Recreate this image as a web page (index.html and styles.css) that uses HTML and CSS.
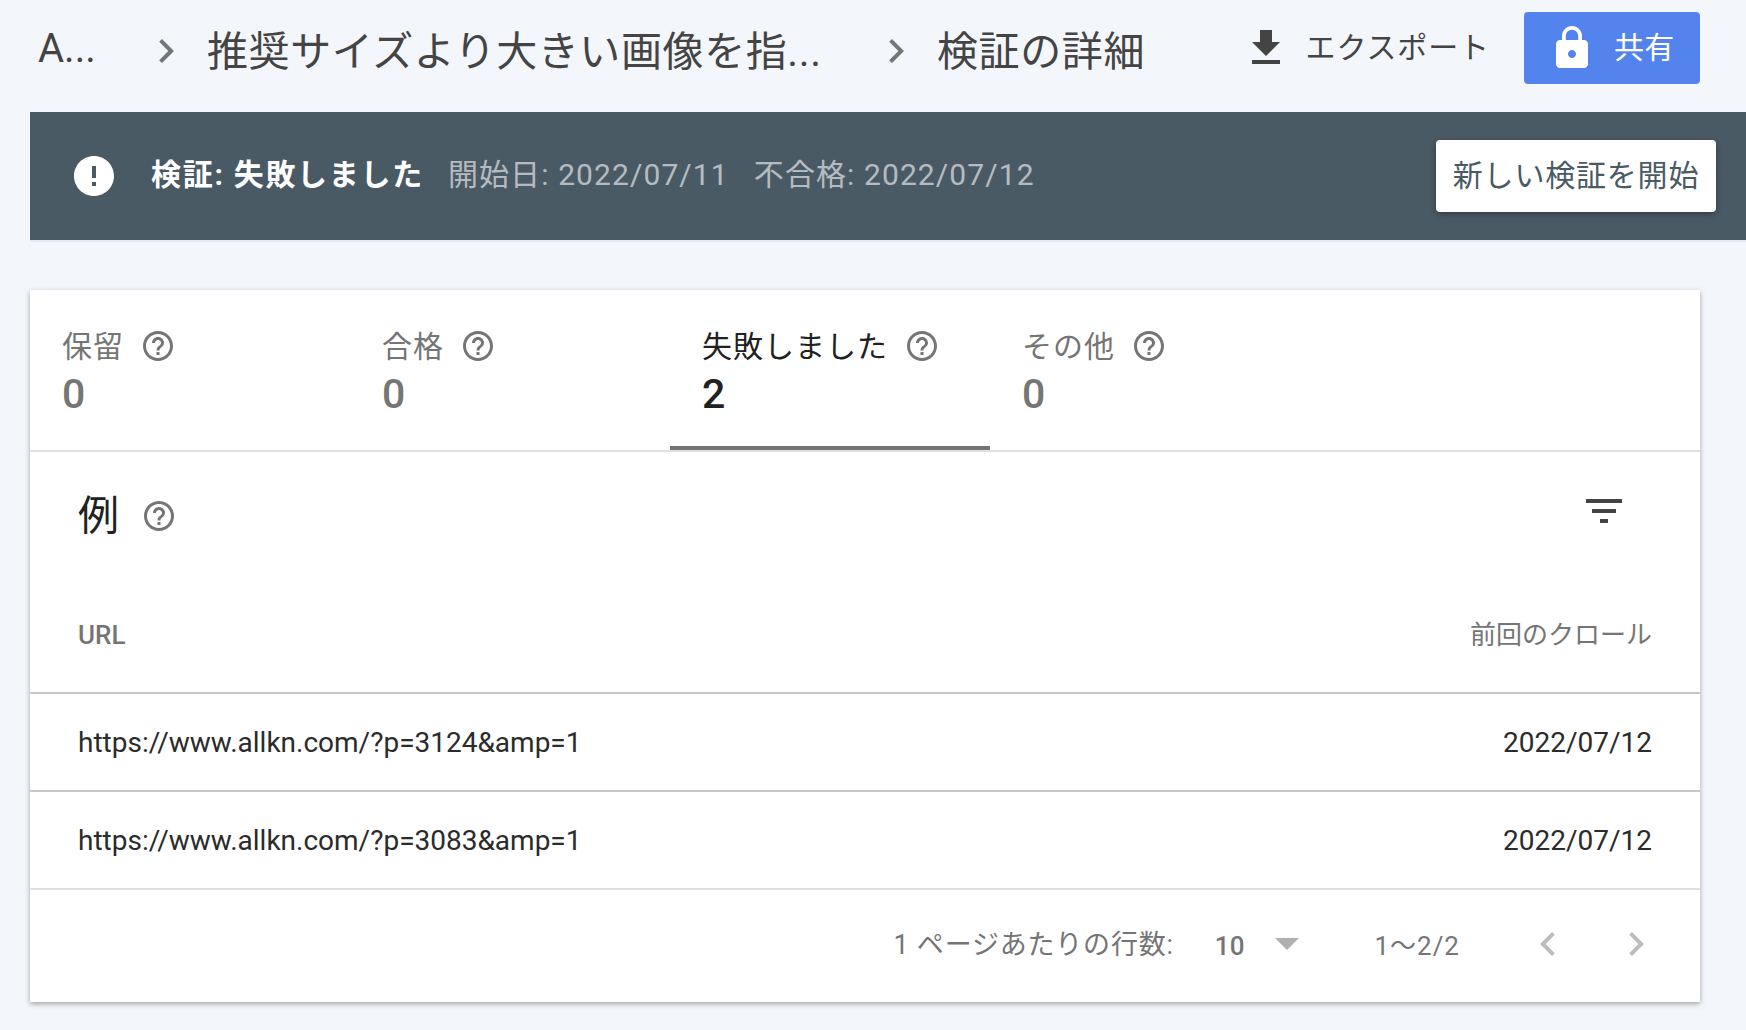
FILE: index.html
```html
<!DOCTYPE html>
<html lang="ja">

<head>
    <meta charset="UTF-8">
    <title>検証の詳細</title>
    <link rel="stylesheet" href="styles.css">
</head>

<body>
    <header class="top">
        <nav class="crumbs">
            <span class="crumb crumb-first">A...</span>
            <svg class="icon crumb-arrow" viewBox="0 0 24 24"><path d="M10 6L8.59 7.41 13.17 12l-4.58 4.59L10 18l6-6z"/></svg>
            <span class="crumb crumb-mid">推奨サイズより大きい画像を指...</span>
            <svg class="icon crumb-arrow" viewBox="0 0 24 24"><path d="M10 6L8.59 7.41 13.17 12l-4.58 4.59L10 18l6-6z"/></svg>
            <span class="crumb crumb-last">検証の詳細</span>
        </nav>
        <div class="actions">
            <div class="export">
                <svg class="icon" viewBox="0 0 24 24"><path d="M19 9h-4V3H9v6H5l7 7 7-7zM5 18v2h14v-2H5z"/></svg>
                <span class="action-text">エクスポート</span>
            </div>
            <div class="share">
                <svg class="icon" viewBox="0 0 24 24"><path d="M18 8h-1V6c0-2.76-2.24-5-5-5S7 3.24 7 6v2H6c-1.1 0-2 .9-2 2v10c0 1.1.9 2 2 2h12c1.1 0 2-.9 2-2V10c0-1.1-.9-2-2-2zm-6 9c-1.1 0-2-.9-2-2s.9-2 2-2 2 .9 2 2-.9 2-2 2zm3.1-9H8.9V6c0-1.71 1.39-3.1 3.1-3.1 1.71 0 3.1 1.39 3.1 3.1v2z"/></svg>
                <span class="action-text">共有</span>
            </div>
        </div>
    </header>

    <section class="banner">
        <svg class="icon banner-icon" viewBox="0 0 24 24"><path d="M12 2C6.48 2 2 6.48 2 12s4.48 10 10 10 10-4.48 10-10S17.52 2 12 2zm1 15h-2v-2h2v2zm0-4h-2V7h2v6z"/></svg>
        <strong class="banner-title">検証: 失敗しました</strong>
        <span class="banner-date">開始日: 2022/07/11</span>
        <span class="banner-date">不合格: 2022/07/12</span>
        <button class="banner-btn">新しい検証を開始</button>
    </section>

    <main class="card">
        <div class="tabs">
            <div class="tab">
                <div class="tab-label">保留
                    <svg class="icon help" viewBox="0 0 24 24"><path d="M11 18h2v-2h-2v2zm1-16C6.48 2 2 6.48 2 12s4.48 10 10 10 10-4.48 10-10S17.52 2 12 2zm0 18c-4.41 0-8-3.59-8-8s3.59-8 8-8 8 3.59 8 8-3.59 8-8 8zm0-14c-2.21 0-4 1.79-4 4h2c0-1.1.9-2 2-2s2 .9 2 2c0 2-3 1.75-3 5h2c0-2.25 3-2.5 3-5 0-2.21-1.79-4-4-4z"/></svg>
                </div>
                <div class="tab-num">0</div>
            </div>
            <div class="tab">
                <div class="tab-label">合格
                    <svg class="icon help" viewBox="0 0 24 24"><path d="M11 18h2v-2h-2v2zm1-16C6.48 2 2 6.48 2 12s4.48 10 10 10 10-4.48 10-10S17.52 2 12 2zm0 18c-4.41 0-8-3.59-8-8s3.59-8 8-8 8 3.59 8 8-3.59 8-8 8zm0-14c-2.21 0-4 1.79-4 4h2c0-1.1.9-2 2-2s2 .9 2 2c0 2-3 1.75-3 5h2c0-2.25 3-2.5 3-5 0-2.21-1.79-4-4-4z"/></svg>
                </div>
                <div class="tab-num">0</div>
            </div>
            <div class="tab tab-active">
                <div class="tab-label">失敗しました
                    <svg class="icon help" viewBox="0 0 24 24"><path d="M11 18h2v-2h-2v2zm1-16C6.48 2 2 6.48 2 12s4.48 10 10 10 10-4.48 10-10S17.52 2 12 2zm0 18c-4.41 0-8-3.59-8-8s3.59-8 8-8 8 3.59 8 8-3.59 8-8 8zm0-14c-2.21 0-4 1.79-4 4h2c0-1.1.9-2 2-2s2 .9 2 2c0 2-3 1.75-3 5h2c0-2.25 3-2.5 3-5 0-2.21-1.79-4-4-4z"/></svg>
                </div>
                <div class="tab-num">2</div>
            </div>
            <div class="tab">
                <div class="tab-label">その他
                    <svg class="icon help" viewBox="0 0 24 24"><path d="M11 18h2v-2h-2v2zm1-16C6.48 2 2 6.48 2 12s4.48 10 10 10 10-4.48 10-10S17.52 2 12 2zm0 18c-4.41 0-8-3.59-8-8s3.59-8 8-8 8 3.59 8 8-3.59 8-8 8zm0-14c-2.21 0-4 1.79-4 4h2c0-1.1.9-2 2-2s2 .9 2 2c0 2-3 1.75-3 5h2c0-2.25 3-2.5 3-5 0-2.21-1.79-4-4-4z"/></svg>
                </div>
                <div class="tab-num">0</div>
            </div>
        </div>

        <div class="section-head">
            <h2 class="section-title">例</h2>
            <svg class="icon help" viewBox="0 0 24 24"><path d="M11 18h2v-2h-2v2zm1-16C6.48 2 2 6.48 2 12s4.48 10 10 10 10-4.48 10-10S17.52 2 12 2zm0 18c-4.41 0-8-3.59-8-8s3.59-8 8-8 8 3.59 8 8-3.59 8-8 8zm0-14c-2.21 0-4 1.79-4 4h2c0-1.1.9-2 2-2s2 .9 2 2c0 2-3 1.75-3 5h2c0-2.25 3-2.5 3-5 0-2.21-1.79-4-4-4z"/></svg>
            <svg class="icon filter" viewBox="0 0 24 24"><path d="M10 18h4v-2h-4v2zM3 6v2h18V6H3zm3 7h12v-2H6v2z"/></svg>
        </div>

        <div class="row row-head">
            <span class="col-url">URL</span>
            <span class="col-crawl">前回のクロール</span>
        </div>
        <div class="row">
            <span>https://www.allkn.com/?p=3124&amp;amp=1</span>
            <span>2022/07/12</span>
        </div>
        <div class="row row-last">
            <span>https://www.allkn.com/?p=3083&amp;amp=1</span>
            <span>2022/07/12</span>
        </div>

        <footer class="pager">
            <span class="pager-label">1 ページあたりの行数:</span>
            <span class="pager-size">10</span>
            <span class="pager-caret"></span>
            <span class="pager-range">1〜2/2</span>
            <svg class="icon pager-arrow pager-prev" viewBox="0 0 24 24"><path d="M15.41 7.41L14 6l-6 6 6 6 1.41-1.41L10.83 12z"/></svg>
            <svg class="icon pager-arrow" viewBox="0 0 24 24"><path d="M10 6L8.59 7.41 13.17 12l-4.58 4.59L10 18l6-6z"/></svg>
        </footer>
    </main>
</body>

</html>
```

FILE: styles.css
```css
* {
    box-sizing: border-box;
}

body {
    margin: 0;
    height: 1030px;
    overflow: hidden;
    background-color: #f3f6fb;
    font-family: Roboto, "Noto Sans CJK JP", sans-serif;
    color: #444;
}

.icon {
    display: block;
    flex: none;
    width: 48px;
    height: 48px;
    fill: currentColor;
}

/* top bar */
.top {
    display: flex;
    align-items: center;
    height: 112px;
    padding: 0 46px 16px 38px;
}

.crumbs {
    display: flex;
    align-items: center;
}

.crumb {
    font-size: 41px;
    letter-spacing: 0.6px;
    white-space: nowrap;
}

.crumb-first {
    width: 104px;
    font-size: 40px;
    letter-spacing: 0;
}

.crumb-mid {
    width: 665px;
    margin-left: 17px;
}

.crumb-last {
    margin-left: 17px;
}

.crumb-arrow {
    margin-top: 6px;
    color: #757575;
}

.actions {
    display: flex;
    align-items: center;
    margin-left: auto;
    gap: 34px;
}

.action-text {
    padding-bottom: 7px;
}

.export {
    display: flex;
    align-items: center;
    gap: 16px;
    font-size: 30px;
    letter-spacing: 0.9px;
}

.share {
    display: flex;
    align-items: center;
    gap: 18px;
    width: 176px;
    height: 72px;
    padding-left: 24px;
    border-radius: 4px;
    background-color: #5384ed;
    color: #fff;
    font-size: 30px;
    letter-spacing: 0.3px;
}

/* status banner */
.banner {
    display: flex;
    align-items: center;
    height: 128px;
    margin-left: 30px;
    padding: 0 30px 0 40px;
    background-color: #4a5a65;
    color: #fff;
    font-size: 30px;
    box-shadow: 0 2px 0 #e6e8ea;
}

.banner-title {
    margin: 0 24px 0 33px;
    padding-bottom: 9px;
    font-size: 30px;
    letter-spacing: 1.7px;
    white-space: nowrap;
}

.banner-date {
    margin-right: 25px;
    padding-bottom: 9px;
    color: rgba(255, 255, 255, 0.6);
    letter-spacing: 1.1px;
    white-space: nowrap;
}

.banner-btn {
    width: 280px;
    height: 72px;
    margin-left: auto;
    padding: 0 0 7px;
    border: 0;
    border-radius: 4px;
    background-color: #fff;
    color: #4a5a65;
    font-family: inherit;
    font-size: 30px;
    letter-spacing: 0.8px;
    box-shadow: 0 2px 6px rgba(0, 0, 0, 0.35);
}

/* card */
.card {
    width: 1670px;
    height: 712px;
    margin: 50px 0 0 30px;
    background-color: #fff;
    box-shadow: 0 2px 5px rgba(60, 64, 67, 0.45);
}

.tabs {
    display: flex;
    height: 162px;
    border-bottom: 2px solid #e0e0e0;
}

.tab {
    width: 320px;
    height: 160px;
    padding: 34px 32px 0;
    color: #757575;
}

.tab-active {
    border-bottom: 4px solid #757575;
    color: #212121;
}

.tab-label {
    display: flex;
    align-items: center;
    gap: 16px;
    height: 40px;
    padding-bottom: 1px;
    font-size: 30px;
    letter-spacing: 1px;
    white-space: nowrap;
}

.help {
    width: 36px;
    height: 36px;
    color: #757575;
}

.tab-label .help {
    margin-top: 5px;
}

.tab-num {
    margin-top: 3px;
    font-size: 41px;
    font-weight: 500;
    line-height: 54px;
}

.section-head {
    display: flex;
    align-items: center;
    gap: 22px;
    height: 124px;
    padding: 39px 72px 35px 48px;
}

.section-title {
    margin: 0;
    color: #212121;
    font-size: 41px;
    font-weight: 400;
    line-height: 50px;
}

.filter {
    margin-left: auto;
    margin-top: -11px;
    color: #444;
}

/* table rows */
.row {
    display: flex;
    align-items: center;
    justify-content: space-between;
    height: 98px;
    padding: 0 48px 0 48px;
    border-bottom: 2px solid #c8c8c8;
    color: #2b2b2b;
    font-size: 28px;
}

.row-head {
    height: 118px;
    color: #757575;
    font-size: 26px;
}

.col-url {
    padding-top: 2px;
    font-weight: 500;
}

.col-crawl {
    padding-bottom: 3px;
}

.row-last {
    border-bottom-color: #e0e0e0;
}

/* pagination */
.pager {
    display: flex;
    align-items: center;
    justify-content: flex-end;
    height: 110px;
    padding: 0 40px 2px 0;
    color: #757575;
    font-size: 26px;
}

.pager-label {
    padding-bottom: 4px;
    font-size: 27px;
    letter-spacing: 0.8px;
}

.pager-size {
    margin: 3px 0 0 41px;
    font-weight: 500;
}

.pager-caret {
    width: 0;
    height: 0;
    margin: 0 75px 0 31px;
    border-left: 12px solid transparent;
    border-right: 12px solid transparent;
    border-top: 12px solid #b0b0b0;
}

.pager-range {
    padding-bottom: 2px;
    letter-spacing: 1px;
}

.pager-arrow {
    color: #bdbdbd;
}

.pager-prev {
    margin: 0 40px 0 64px;
}
```
